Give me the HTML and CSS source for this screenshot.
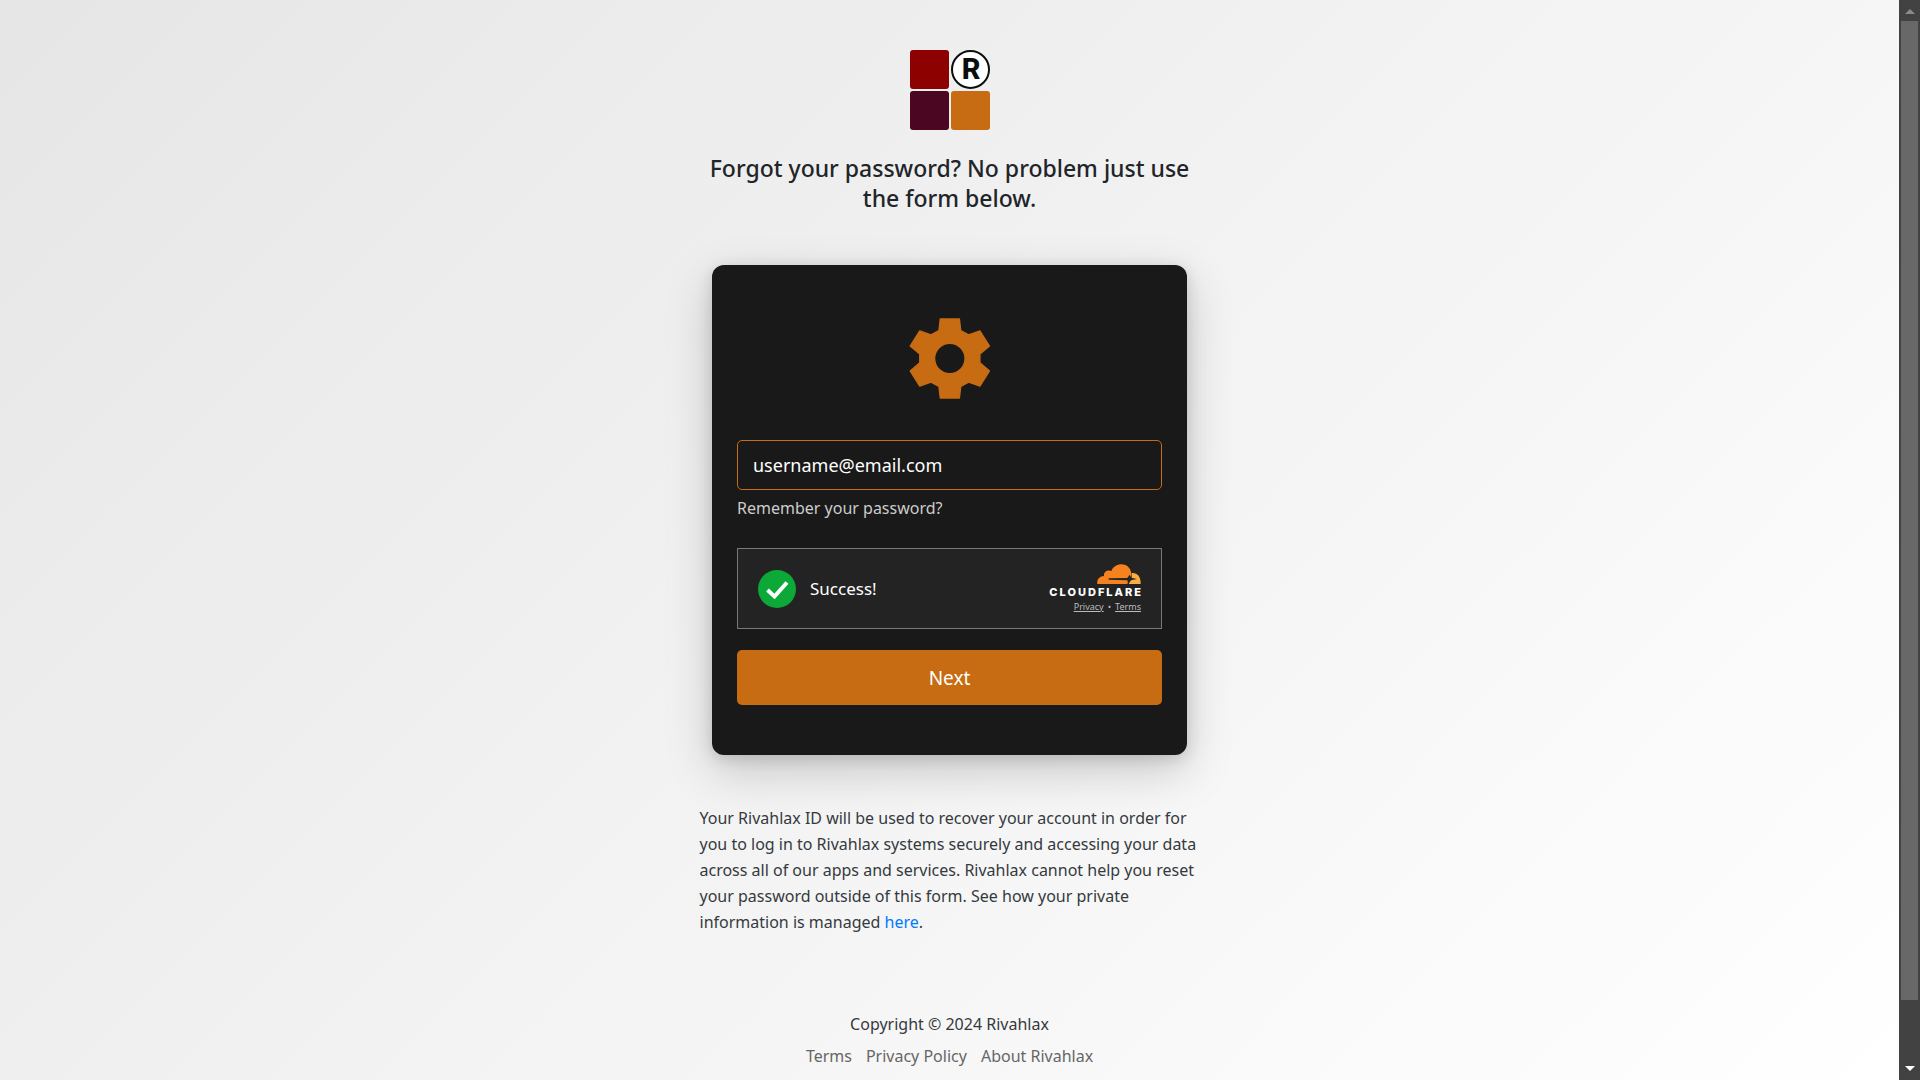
FILE: index.html
```html
<!DOCTYPE html>
<html lang="en">
<head>
<meta charset="utf-8">
<meta name="viewport" content="width=device-width, initial-scale=1">
<title>Rivahlax - Forgot password</title>
<link rel="stylesheet" href="styles.css">
</head>
<body>
<div class="window">
  <div class="page">
    <header class="intro">
      <svg class="logo" viewBox="0 0 80 80" role="img" aria-label="Rivahlax">
        <rect width="39" height="39" rx="3" fill="#8e0101"/>
        <circle cx="60.500" cy="19.500" r="18.500" fill="#fff" stroke="#0a0f0d" stroke-width="2"/>
        <text class="logo-letter" x="61" y="29" text-anchor="middle">R</text>
        <rect y="41" width="39" height="39" rx="3" fill="#4b0622"/>
        <rect x="41" y="41" width="39" height="39" rx="3" fill="#c76c12"/>
      </svg>
      <h1 class="title">Forgot your password? No problem just use the form below.</h1>
    </header>

    <main class="main">
      <form class="card">
        <svg class="gear" viewBox="56 53 247 245" aria-hidden="true">
          <path fill="#c76c12" stroke="#c76c12" stroke-width="4" stroke-linejoin="round" fill-rule="evenodd" d="M150 56H208L212 91L236 104L270 92L299 138L270 162V188L299 213L270 259L236 247L212 260L208 295H150L146 260L122 247L88 259L59 213L88 188V162L59 138L88 92L122 104L146 91ZM179 129.500A46 46 0 1 0 179 221.500A46 46 0 1 0 179 129.500Z"/>
        </svg>
        <input class="email" type="email" placeholder="username@email.com" aria-label="Email">
        <a class="remember" href="#">Remember your password?</a>

        <div class="turnstile">
          <svg class="check" viewBox="0 0 38 38" aria-hidden="true">
            <circle cx="19" cy="19" r="19" fill="#0ca939"/>
            <path d="M9.500 20L16.500 26.500L29 12.500" fill="none" stroke="#fff" stroke-width="4"/>
          </svg>
          <span class="status">Success!</span>
          <div class="brand">
            <svg class="cloud" viewBox="0 0 130 60" aria-hidden="true">
              <path fill="#f6821f" d="M0 60C-2 47 6 36 20 36C18 23 31 16 42 21C53-8 99-6 102 29C103 34 99 39 95 44L90 60Z"/>
              <path fill="#fbad41" d="M103 27C119 25 131 37 130 60H94L98 51L103 44Z"/>
              <path fill="#232323" d="M97 32L101 41L119 45L101 49L93 60L90 49L34 47V43L90 42Z"/>
            </svg>
            <span class="wordmark">CLOUDFLARE</span>
            <span class="legal"><a href="#">Privacy</a><span>•</span><a href="#">Terms</a></span>
          </div>
        </div>
        <button class="next" type="button">Next</button>
      </form>

      <p class="note">Your Rivahlax ID will be used to recover your account in order for you to log in to Rivahlax systems securely and accessing your data across all of our apps and services. Rivahlax cannot help you reset your password outside of this form. See how your private information is managed <a href="#">here</a>.</p>
    </main>

    <footer class="footer">
      <span>Copyright © 2024 Rivahlax</span>
      <nav class="links"><a href="#">Terms</a><a href="#">Privacy Policy</a><a href="#">About Rivahlax</a></nav>
    </footer>
  </div>

  <div class="scrollbar" aria-hidden="true">
    <svg class="arrow arrow-up" viewBox="0 0 10 5"><path d="M5 0L10 5H0Z"/></svg>
    <div class="thumb"></div>
    <svg class="arrow" viewBox="0 0 10 5"><path d="M0 0H10L5 5Z"/></svg>
  </div>
</div>
</body>
</html>
```
FILE: styles.css
```css
* {
  box-sizing: border-box;
}

body {
  margin: 0;
  color: #343a40;
  font-family: "Noto Sans", "Open Sans", sans-serif;
  font-size: 16px;
  line-height: 26px;
}

a {
  color: inherit;
  text-decoration: none;
}

svg {
  display: block;
}

.window {
  display: grid;
  grid-template-columns: 1fr 21px;
  min-height: 100vh;
}

.page {
  display: flex;
  flex-direction: column;
  align-items: center;
  padding: 50px 16px 10px;
  background: linear-gradient(135deg, #e6e6e6, #fff);
}

.intro {
  display: flex;
  flex-direction: column;
  align-items: center;
  gap: 23px;
  width: 100%;
  max-width: 500px;
}

.logo {
  width: 80px;
  height: 80px;
}

.logo-letter {
  font-family: Roboto, sans-serif;
  font-size: 29px;
  font-weight: 800;
  fill: #0a0f0d;
}

.title {
  margin: 0;
  color: #212529;
  font-size: 23px;
  font-weight: 550;
  line-height: 30px;
  text-align: center;
}

.main {
  display: flex;
  flex-direction: column;
  align-items: center;
  gap: 50px;
  width: 100%;
  max-width: 500px;
  margin-top: 52px;
}

.card {
  display: flex;
  flex-direction: column;
  width: 100%;
  max-width: 475px;
  padding: 53px 25px 50px;
  border-radius: 12px;
  background: #191919;
  box-shadow: 0 16px 48px rgba(0, 0, 0, 0.18), 0 4px 16px rgba(0, 0, 0, 0.14);
}

.gear {
  align-self: center;
  width: 82px;
  height: 81px;
}

.email {
  width: 100%;
  height: 50px;
  margin-top: 41px;
  padding: 0 15px;
  border: 1px solid #c76c12;
  border-radius: 5px;
  background: transparent;
  color: #fff;
  font: inherit;
  font-size: 18px;
}

.email::placeholder {
  color: #fff;
  opacity: 1;
}

.remember {
  align-self: flex-start;
  margin-top: 5px;
  color: #ccc;
}

.turnstile {
  display: flex;
  align-items: center;
  gap: 14px;
  height: 81px;
  margin: 27px 0 21px;
  padding: 0 20px;
  border: 1px solid #797979;
  background: #232323;
  color: #fff;
}

.check {
  width: 38px;
  height: 38px;
}

.status {
  font-size: 17px;
}

.brand {
  display: flex;
  flex-direction: column;
  align-items: flex-end;
  margin-left: auto;
}

.cloud {
  width: 44px;
  height: 20px;
}

.wordmark {
  margin-right: -2px;
  font-family: Inter, sans-serif;
  font-size: 11px;
  font-weight: 800;
  letter-spacing: 2px;
  line-height: 16px;
}

.legal {
  display: flex;
  gap: 4px;
  color: #bbb;
  font-size: 9px;
  line-height: 14px;
}

.legal a {
  text-decoration: underline;
}

.next {
  height: 55px;
  border: 0;
  border-radius: 5px;
  background: #c76c12;
  color: #fff;
  font: inherit;
  font-size: 19px;
}

.note {
  margin: 0;
}

.note a {
  color: #007bff;
}

.footer {
  display: flex;
  flex-direction: column;
  align-items: center;
  gap: 6px;
  margin-top: 76px;
}

.links {
  display: flex;
  gap: 14px;
  color: #666;
}

.scrollbar {
  display: flex;
  flex-direction: column;
  align-items: center;
  padding: 9px 2px;
  background: #424242;
}

.thumb {
  width: 17px;
  height: calc(100vh - 101px);
  margin: 7px 0 auto;
  background: #686868;
}

.arrow {
  width: 10px;
  height: 5px;
  fill: #fff;
}

.arrow-up {
  fill: #8a8a8a;
}
```
